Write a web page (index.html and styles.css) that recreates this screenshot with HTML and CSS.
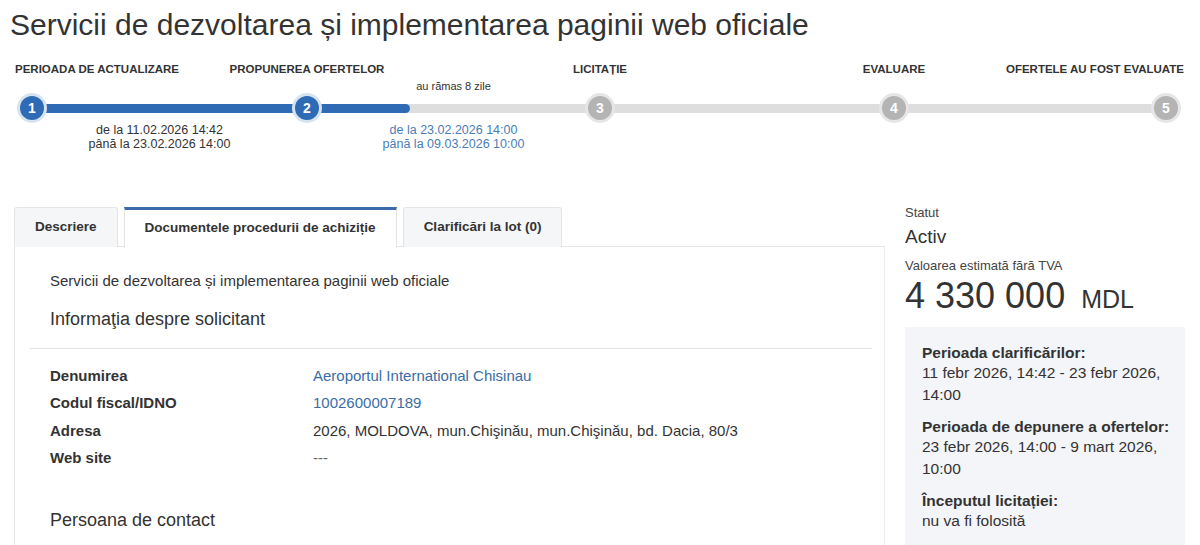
FILE: index.html
```html
<!DOCTYPE html>
<html lang="ro">
<head>
<meta charset="utf-8">
<title>Servicii de dezvoltarea și implementarea paginii web oficiale</title>
<link rel="stylesheet" href="styles.css">
</head>
<body>
<h1 class="title">Servicii de dezvoltarea și implementarea paginii web oficiale</h1>

<div class="stepper">
  <div class="step-label c1 first">PERIOADA DE ACTUALIZARE</div>
  <div class="step-label c3">PROPUNEREA OFERTELOR</div>
  <div class="remaining c4">au rămas 8 zile</div>
  <div class="step-label c5">LICITAȚIE</div>
  <div class="step-label c7">EVALUARE</div>
  <div class="step-label c9 last">OFERTELE AU FOST EVALUATE</div>

  <div class="bar c2"><div class="fill" style="width:100%"></div></div>
  <div class="bar c4"><div class="fill" style="width:34%"></div></div>
  <div class="bar c6"></div>
  <div class="bar c8"></div>

  <div class="dot done c1">1</div>
  <div class="dot done c3">2</div>
  <div class="dot c5">3</div>
  <div class="dot c7">4</div>
  <div class="dot c9">5</div>

  <div class="dates d1">de la 11.02.2026 14:42<br>până la 23.02.2026 14:00</div>
  <div class="dates d2 current">de la 23.02.2026 14:00<br>până la 09.03.2026 10:00</div>
</div>

<div class="main">
  <div class="content">
    <div class="tabs">
      <div class="tab">Descriere</div>
      <div class="tab active">Documentele procedurii de achiziție</div>
      <div class="tab">Clarificări la lot (0)</div>
    </div>
    <div class="panel">
      <p class="lead">Servicii de dezvoltarea și implementarea paginii web oficiale</p>
      <h2 class="section-title">Informaţia despre solicitant</h2>
      <div class="rule"></div>
      <dl class="info">
        <dt>Denumirea</dt><dd><a class="link">Aeroportul International Chisinau</a></dd>
        <dt>Codul fiscal/IDNO</dt><dd><a class="link">1002600007189</a></dd>
        <dt>Adresa</dt><dd>2026, MOLDOVA, mun.Chişinău, mun.Chişinău, bd. Dacia, 80/3</dd>
        <dt>Web site</dt><dd class="muted">---</dd>
      </dl>
      <h2 class="section-title contact">Persoana de contact</h2>
    </div>
  </div>

  <aside class="side">
    <div class="side-label">Statut</div>
    <div class="status">Activ</div>
    <div class="side-label value-label">Valoarea estimată fără TVA</div>
    <div class="amount">4 330 000 <span class="currency">MDL</span></div>
    <div class="periods">
      <div class="p-head">Perioada clarificărilor:</div>
      <div class="p-val">11 febr 2026, 14:42 - 23 febr 2026, 14:00</div>
      <div class="p-head">Perioada de depunere a ofertelor:</div>
      <div class="p-val">23 febr 2026, 14:00 - 9 mart 2026, 10:00</div>
      <div class="p-head">Începutul licitației:</div>
      <div class="p-val">nu va fi folosită</div>
    </div>
  </aside>
</div>
</body>
</html>
```

FILE: styles.css
```css
* { box-sizing: border-box; }

html, body {
  margin: 0;
  padding: 0;
  background: #ffffff;
}

body {
  font-family: "Liberation Sans", Arial, sans-serif;
  color: #333333;
  overflow: hidden;
}

.title {
  margin: 7px 0 0 10px;
  font-size: 30px;
  line-height: 36px;
  font-weight: 400;
  color: #333333;
}

/* ---------- stepper ---------- */
.stepper {
  display: grid;
  grid-template-columns: 30px 245fr 30px 263fr 30px 264fr 30px 242fr 30px;
  grid-template-rows: 31px 30px auto;
  margin: 19px 19px 0 17px;
}

.c1 { grid-column: 1; }
.c2 { grid-column: 2; }
.c3 { grid-column: 3; }
.c4 { grid-column: 4; }
.c5 { grid-column: 5; }
.c6 { grid-column: 6; }
.c7 { grid-column: 7; }
.c8 { grid-column: 8; }
.c9 { grid-column: 9; }

.step-label {
  grid-row: 1;
  align-self: start;
  justify-self: center;
  white-space: nowrap;
  font-size: 11.5px;
  line-height: 14px;
  font-weight: 700;
  color: #333333;
}
.step-label.first { justify-self: start; margin-left: -2px; }
.step-label.last { justify-self: end; margin-right: -3px; }

.remaining {
  grid-row: 1;
  align-self: end;
  justify-self: center;
  font-size: 11px;
  line-height: 13px;
  color: #333333;
  margin-bottom: 0;
}

.bar {
  grid-row: 2;
  align-self: center;
  height: 9px;
  margin: 0 -5px;
  background: #dedede;
  border-radius: 5px;
  overflow: hidden;
}
.fill {
  height: 100%;
  background: #2e6bb4;
  border-radius: 5px;
}

.dot {
  grid-row: 2;
  position: relative;
  z-index: 1;
  align-self: center;
  justify-self: center;
  width: 24px;
  height: 24px;
  border-radius: 50%;
  background: #b4b4b4;
  box-shadow: 0 0 0 3px #e6e6e6;
  color: #ffffff;
  font-size: 14px;
  font-weight: 700;
  line-height: 24px;
  text-align: center;
}
.dot.done {
  background: #2e6bb4;
  box-shadow: 0 0 0 3px #d6e3f1;
}

.dates {
  grid-row: 3;
  font-size: 12.5px;
  line-height: 14px;
  text-align: center;
  color: #333333;
  white-space: nowrap;
}
.d1 { grid-column: 1 / 3; padding-left: 10px; }
.d2 { grid-column: 4; }
.dates.current { color: #4a7db5; }

/* ---------- main ---------- */
.main {
  display: grid;
  grid-template-columns: 871px 280px;
  column-gap: 20px;
  margin: 56px 0 0 14px;
  align-items: start;
}

.tabs {
  display: flex;
  gap: 6px;
  height: 40px;
  border-bottom: 1px solid #e6e6e6;
}

.tab {
  height: 40px;
  padding: 0 20px;
  border: 1px solid #e4e4e4;
  border-bottom: none;
  border-radius: 3px 3px 0 0;
  background: #f5f6f8;
  font-size: 13.5px;
  font-weight: 700;
  line-height: 38px;
  color: #333333;
  white-space: nowrap;
}
.tab.active {
  background: #ffffff;
  border-top: 3px solid #3b6aa8;
  line-height: 36px;
  height: 41px;
  border-radius: 0;
}

.panel {
  border-left: 1px solid #e6e6e6;
  border-right: 1px solid #ececec;
  padding: 24px 12px 40px 15px;
  min-height: 320px;
}

.lead {
  margin: 0;
  padding-left: 20px;
  font-size: 15px;
  line-height: 20px;
  color: #333333;
}

.section-title {
  margin: 16px 0 0;
  padding-left: 20px;
  font-size: 18px;
  line-height: 24px;
  font-weight: 400;
  color: #333333;
}
.section-title.contact { margin-top: 37px; }

.rule {
  margin-top: 17px;
  height: 1px;
  background: #e3e3e3;
}

.info {
  display: grid;
  grid-template-columns: 263px 1fr;
  margin: 13px 0 0;
  padding-left: 20px;
  font-size: 15px;
  line-height: 27.3px;
}
.info dt { font-weight: 700; color: #333333; }
.info dd { margin: 0; color: #333333; }
.info dd.muted { color: #666666; }
.link { color: #3a6da6; text-decoration: none; }

/* ---------- side ---------- */
.side { padding-top: 0; }

.side-label {
  margin-top: -1px;
  font-size: 13px;
  line-height: 14px;
  color: #444444;
}
.side-label.value-label { margin-top: 10px; }

.status {
  margin-top: 5px;
  font-size: 19px;
  line-height: 24px;
  color: #333333;
}

.amount {
  margin-top: 3px;
  font-size: 36px;
  line-height: 40px;
  color: #333333;
  white-space: nowrap;
}
.currency {
  font-size: 25px;
  margin-left: 6px;
}

.periods {
  margin-top: 8px;
  background: #f4f5f9;
  padding: 17px 12px 20px 17px;
  min-height: 240px;
  font-size: 15.5px;
  color: #333333;
}
.p-head {
  font-weight: 700;
  line-height: 18px;
}
.p-head + .p-val { line-height: 22px; }
.p-val + .p-head { margin-top: 12px; }
```
